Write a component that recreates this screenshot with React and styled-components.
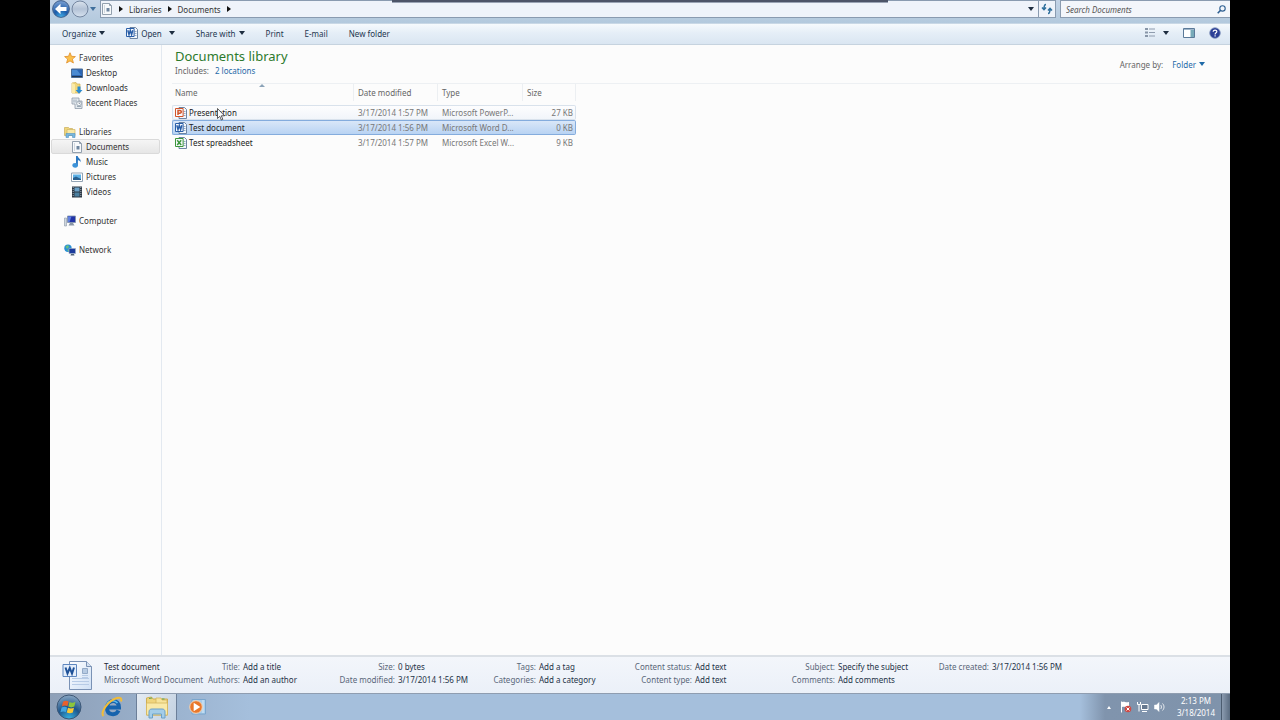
import React from 'react';
import styled, { createGlobalStyle, css } from 'styled-components';

const GlobalStyle = createGlobalStyle`
  * { box-sizing: border-box; }
  body {
    margin: 0;
    background: #000;
    font-family: "Noto Sans", "Open Sans", sans-serif;
    font-size: 8px;
    line-height: 15px;
    color: #333;
  }
  button, input, table { font: inherit; color: inherit; }
`;

const Window = styled.div`
  display: flex;
  flex-direction: column;
  height: 100vh;
  margin: 0 50px;
  overflow: hidden;
  background: #fcfcfc;
  white-space: nowrap;
`;

const PlainButton = styled.button`
  display: flex;
  align-items: center;
  gap: ${({ $gap }) => $gap || '3px'};
  padding: 0;
  border: 0;
  background: none;
  cursor: pointer;
`;

const Caret = styled.span`
  flex: none;
  border: 3px solid transparent;
  border-top: 4px solid ${({ $color }) => $color || '#1e2d40'};
  border-bottom: 0;
`;

const RightCaret = styled.span`
  flex: none;
  border: 3px solid transparent;
  border-left: 4px solid #111;
  border-right: 0;
`;

/* address bar */

const AddressRow = styled.header`
  position: relative;
  display: flex;
  flex: none;
  height: 24px;
  padding-left: 2px;
  gap: 4px;
  background: linear-gradient(#c3d3e6, #b3c9dd);
  border-bottom: 1px solid #c9d8e6;

  &::before {
    content: "";
    position: absolute;
    top: 0;
    left: 29%;
    width: 42%;
    height: 2px;
    background: #4d5468;
    border-bottom: 1px solid #9aa3b4;
  }
`;

const NavButtons = styled.div`
  display: flex;
  align-items: center;
  gap: 1px;
  height: 18px;
`;

const AddressBox = styled.nav`
  display: flex;
  flex: 1;
  align-items: center;
  height: 18px;
  background: #eff3fa;
  border: 1px solid #8a9bb0;
`;

const Crumbs = styled.div`
  display: flex;
  flex: 1;
  align-items: center;
  gap: 6px;

  a {
    color: #333;
    text-decoration: none;
  }
`;

const RefreshButton = styled(PlainButton)`
  justify-content: center;
  width: 17px;
  height: 16px;
  margin-left: 4px;
  border-left: 1px solid #8a9bb0;
`;

const SearchBox = styled.label`
  display: flex;
  align-items: center;
  width: 170px;
  height: 18px;
  padding: 0 4px 0 5px;
  background: #f3f6fb;
  border: 1px solid #8a9bb0;
  border-right: 0;
`;

const SearchInput = styled.input`
  flex: 1;
  min-width: 0;
  padding: 0;
  border: 0;
  outline: 0;
  background: none;

  &::placeholder {
    color: #555;
    font-style: italic;
    opacity: 1;
  }
`;

/* command bar */

const CommandBar = styled.div`
  display: flex;
  flex: none;
  align-items: center;
  gap: 21px;
  height: 21px;
  padding: 0 9px 2px 12px;
  color: #23364f;
  background: linear-gradient(#f6fafd, #e5eef7 45%, #dae6f2);
  border-bottom: 1px solid #c6d3df;
`;

const Spacer = styled.div`
  flex: 1;
`;

const ViewTools = styled.div`
  display: flex;
  align-items: center;
  gap: 14px;
`;

/* body */

const Body = styled.div`
  display: flex;
  flex: 1;
  min-height: 0;
`;

const Sidebar = styled.nav`
  display: flex;
  flex: none;
  flex-direction: column;
  gap: 14px;
  width: 112px;
  padding: 5px 1px 0;
  border-right: 1px solid #e3e9f0;
`;

const TreeGroup = styled.div`
  display: flex;
  flex-direction: column;
`;

const TreeItem = styled.a`
  display: flex;
  align-items: center;
  gap: 3px;
  height: 15px;
  padding-left: ${({ $child }) => ($child ? '19px' : '12px')};
  border: 1px solid transparent;
  border-radius: 2px;
  color: #333;
  text-decoration: none;

  ${({ $active }) => $active && css`
    background: linear-gradient(#f5f5f5, #e6e6e6);
    border-color: #dadada;
  `}
`;

const Main = styled.main`
  flex: 1;
  min-width: 0;
`;

const LibraryHeader = styled.div`
  display: flex;
  justify-content: space-between;
  align-items: center;
  height: 39px;
  margin: 0 10px;
  padding: 0 15px 0 3px;
  color: #666;
  border-bottom: 1px solid #edf0f3;
`;

const LibraryName = styled.div`
  padding-bottom: 5px;
`;

const LibraryTitle = styled.h1`
  margin: 0;
  font-size: 13px;
  font-weight: 400;
  line-height: 18px;
  color: #2c7a2c;
`;

const Includes = styled.p`
  display: flex;
  gap: 6px;
  margin: 0;
  line-height: 12px;

  a {
    color: #1f6aa8;
    text-decoration: none;
  }
`;

const ArrangeBy = styled.div`
  display: flex;
  align-items: center;
  gap: 9px;
  color: #666;
`;

const FolderButton = styled(PlainButton)`
  color: #1f6aa8;
`;

const FileTable = styled.table`
  width: 404px;
  margin-left: 10px;
  table-layout: fixed;
  border-spacing: 0;
  border-collapse: separate;
`;

const HeadCell = styled.th`
  position: relative;
  width: ${({ $width }) => $width};
  height: 17px;
  padding: 0 0 0 ${({ $first }) => ($first ? '3px' : '4px')};
  border-right: 1px solid #eceff2;
  color: #666;
  font-weight: 400;
  line-height: 16px;
  text-align: left;
`;

const SortMark = styled.span`
  position: absolute;
  top: 0;
  left: 87px;
  border: 3px solid transparent;
  border-top: 0;
  border-bottom-color: #8ba3b8;
`;

const HeadGap = styled.tr`
  height: 4px;
`;

const rowState = {
  hover: css`
    background: linear-gradient(#fdfdfe, #f1f5fa);
    border-color: #d9e2ec;
  `,
  selected: css`
    background: linear-gradient(#d9e7f8, #b9d3f3);
    border-color: #84acdd;
  `,
};

const Cell = styled.td`
  height: 15px;
  padding: 0 2px 0 4px;
  border: 1px solid transparent;
  border-width: 1px 0;
  color: #777;
  line-height: 13px;
  text-align: ${({ $right }) => ($right ? 'right' : 'left')};
  overflow: hidden;
  text-overflow: ellipsis;

  &:first-child {
    padding-left: 2px;
    border-left-width: 1px;
    border-radius: 2px 0 0 2px;
    color: #222;
    overflow: visible;
  }
  &:last-child {
    border-right-width: 1px;
    border-radius: 0 2px 2px 0;
  }
  ${({ $state }) => rowState[$state]}
`;

const FileName = styled.span`
  position: relative;
  display: flex;
  align-items: center;
  gap: 2px;
`;

const Pointer = styled.svg`
  position: absolute;
  top: 2px;
  left: 42px;
`;

/* details pane */

const Details = styled.section`
  display: flex;
  flex: none;
  height: 38px;
  padding: 3px 0 0 12px;
  background: linear-gradient(#f3f6fb, #ebf0f8);
  border-top: 2px solid #dbe0e6;
  color: #5a6779;
  line-height: 13px;
`;

const FileSummary = styled.div`
  flex: none;
  width: 110px;
  padding-left: 10px;

  strong {
    display: block;
    font-weight: 400;
    color: #1e2835;
  }
`;

const Props = styled.dl`
  display: grid;
  flex: none;
  grid-template-columns: ${({ $label }) => $label} auto;
  grid-auto-rows: 13px;
  justify-content: start;
  column-gap: 3px;
  width: ${({ $width }) => $width};
  margin: 0;

  dt { text-align: right; }
  dd { margin: 0; color: #253247; }
`;

/* taskbar */

const Taskbar = styled.footer`
  display: flex;
  flex: none;
  align-items: stretch;
  height: 27px;
  background: linear-gradient(90deg, #8ea0b8, #9cb4d0 130px, #a5bfdc 200px, #a5bfdc calc(100% - 150px), #8094ad calc(100% - 125px), #7f93ab);
  border-top: 1px solid #8f9db0;
`;

const TaskButton = styled(PlainButton)`
  justify-content: center;
  width: ${({ $width }) => $width};
  border: 1px solid transparent;
  border-width: 0 1px;

  ${({ $active }) => $active && css`
    background: linear-gradient(120deg, #e4ebf3, #c3d1e1);
    border-color: #6c7f99;
  `}
`;

const Tray = styled.div`
  display: flex;
  align-items: center;
  gap: 5px;
`;

const UpCaret = styled.span`
  border: 2px solid transparent;
  border-top: 0;
  border-bottom: 3px solid #fff;
  margin-right: 4px;
`;

const Clock = styled.time`
  width: 50px;
  color: #fff;
  line-height: 12px;
  text-align: center;
`;

const ShowDesktop = styled.button`
  width: 9px;
  padding: 0;
  border: 0;
  border-left: 1px solid #4c5c70;
  background: linear-gradient(90deg, #8b9bb0, #5a6b80);
`;

/* icons */

const BackIcon = () => (
  <svg width="18" height="18" viewBox="0 0 18 18">
    <defs>
      <radialGradient id="back" cx=".5" cy="1" r=".9">
        <stop offset="0" stopColor="#46b4ec" />
        <stop offset=".5" stopColor="#1c5aa8" />
        <stop offset="1" stopColor="#6d96cc" />
      </radialGradient>
    </defs>
    <circle cx="9" cy="9" r="8.4" fill="url(#back)" stroke="#3d5a85" strokeWidth=".9" />
    <path d="M3 9l5.500-5.200v3.300H14.500v3.800H8.500v3.300z" fill="#fff" />
  </svg>
);

const ForwardIcon = () => (
  <svg width="18" height="18" viewBox="0 0 18 18">
    <defs>
      <linearGradient id="fwd" x2="0" y2="1">
        <stop offset="0" stopColor="#dbe4ee" />
        <stop offset=".5" stopColor="#b3c2d6" />
        <stop offset="1" stopColor="#d6e2ef" />
      </linearGradient>
    </defs>
    <circle cx="9" cy="9" r="8" fill="url(#fwd)" stroke="#7486a0" />
  </svg>
);

const DocIcon = () => (
  <svg width="12" height="12" viewBox="0 0 12 12">
    <path d="M1.500.5h7l2 2v9h-9z" fill="#f7f9fb" stroke="#93a0ae" />
    <path d="M8.500.5v2h2" fill="none" stroke="#93a0ae" />
    <path d="M3 3h1M3 5h1M3 7h1M3 9h1" stroke="#a9b5c2" />
    <path d="M5.500 5h3v3.500h-3z" fill="#6f86a0" />
  </svg>
);

const RefreshIcon = () => (
  <svg width="12" height="12" viewBox="0 0 12 12" fill="none" stroke="#2f6f9c" strokeWidth="1.500">
    <path d="M5 1.500C3.500 1.500 3 3 3 6M1 4.400l2 2.200 2-2.200" />
    <path d="M7 10.500c1.600 0 2-1.500 2-4.500M7 7.600l2-2.200 2 2.200" />
  </svg>
);

const SearchIcon = () => (
  <svg width="9" height="9" viewBox="0 0 9 9" fill="none" stroke="#2e5f91">
    <circle cx="5.500" cy="3.400" r="2.700" strokeWidth="1.100" />
    <path d="M3.600 5.300L.7 8.300" strokeWidth="1.600" />
  </svg>
);

const StarIcon = () => (
  <svg width="12" height="12" viewBox="0 0 12 12">
    <path d="M6 .7l1.500 3.600 3.900.3-3 2.500 1 3.900L6 8.900 2.600 11l1-3.900-3-2.500 3.900-.3z" fill="#fbc04a" stroke="#e08e2c" strokeWidth=".8" />
  </svg>
);

const DesktopIcon = () => (
  <svg width="12" height="12" viewBox="0 0 12 12">
    <path d="M.5 2h11v8.500H.5z" fill="#2c66b4" stroke="#4d6d96" />
    <path d="M1 3h5l4 5H1z" fill="#4b8bd2" />
    <path d="M1 9.500h10" stroke="#21364f" />
  </svg>
);

const DownloadsIcon = () => (
  <svg width="12" height="12" viewBox="0 0 12 12">
    <path d="M1 1l4-.5 1 1.500h3v9H1z" fill="#f1d77b" stroke="#cfae52" strokeWidth=".7" />
    <path d="M1 1l3 1.500v9L1 11z" fill="#fbeba9" />
    <path d="M6.500 4.500h3V8h2L8 11.700 4.600 8h1.900z" fill="#2b8bd0" />
  </svg>
);

const RecentIcon = () => (
  <svg width="12" height="12" viewBox="0 0 12 12">
    <path d="M1 1h7v3h3v7.500H4V7H1z" fill="#e3e9ee" stroke="#8f9ba8" strokeWidth=".8" />
    <path d="M3 2.500v3M5 2.500v3M6 9.500h4" stroke="#9daab6" />
    <circle cx="8" cy="6.500" r="2.300" fill="#f7f9fb" stroke="#7f8e9c" strokeWidth=".7" />
    <path d="M8 5.200v1.300h1" fill="none" stroke="#647484" strokeWidth=".6" />
  </svg>
);

const LibrariesIcon = () => (
  <svg width="12" height="12" viewBox="0 0 12 12">
    <path d="M.5 1.500h4l1 1h3v7h-8z" fill="#f0d67a" stroke="#c9ad5c" strokeWidth=".7" />
    <path d="M3 3.500h8v6H3z" fill="#f8e9a8" stroke="#d0b663" strokeWidth=".7" />
    <path d="M2 7.500h9v4H8.500v-2h-4v2H2z" fill="#79b6df" stroke="#5195c4" strokeWidth=".6" />
  </svg>
);

const MusicIcon = () => (
  <svg width="12" height="12" viewBox="0 0 12 12">
    <path d="M5 0h1.700c.3 2.300 3.600 2.700 2.900 6.200C9 4.800 8 4.200 6.900 4.200V9.500H5z" fill="#2b78c2" />
    <ellipse cx="4.200" cy="9.300" rx="2.800" ry="2.400" fill="#3d93d8" />
  </svg>
);

const PicturesIcon = () => (
  <svg width="12" height="12" viewBox="0 0 12 12">
    <path d="M.5 2h11v8.500H.5z" fill="#fff" stroke="#93a4b5" />
    <path d="M2 3.500h8V9H2z" fill="#5db1e6" />
    <path d="M2 9V7l3-1.500L10 8v1z" fill="#28608f" />
  </svg>
);

const VideosIcon = () => (
  <svg width="12" height="12" viewBox="0 0 12 12">
    <path d="M1 .5h10v11H1z" fill="#2d3844" />
    <path d="M3.500 1.500h5v4h-5z" fill="#6ba2c9" />
    <path d="M3.500 6.500h5v4h-5z" fill="#4a7f9f" />
    <path d="M2.200 1v10M9.800 1v10" stroke="#9fabb8" strokeDasharray="1 1" />
  </svg>
);

const ComputerIcon = () => (
  <svg width="12" height="12" viewBox="0 0 12 12">
    <path d="M.5 3h2v8h-2z" fill="#cfd6de" stroke="#8c99a8" strokeWidth=".6" />
    <path d="M3.500 1h8v6.500h-8z" fill="#2133a8" stroke="#8495aa" strokeWidth=".8" />
    <path d="M4 1.500h3.500l-2 5.500H4z" fill="#5f7fe0" />
    <path d="M6 8h3l1.500 2.500h-6z" fill="#8996a6" />
  </svg>
);

const NetworkIcon = () => (
  <svg width="12" height="12" viewBox="0 0 12 12">
    <circle cx="4" cy="4.200" r="3.700" fill="#2a8fd6" />
    <path d="M1.500 2.500L4 1l1 2-2 2zM3 6l2-.5L5 8z" fill="#69c17e" />
    <path d="M5 4.500h6.500v5H5z" fill="#1c3b9c" stroke="#9caec4" strokeWidth=".7" />
    <path d="M7 10h3l.5 1.500h-4z" fill="#52647a" />
  </svg>
);

const OfficeIcon = ({ color, letter }) => (
  <svg width="12" height="12" viewBox="0 0 12 12">
    <path d="M4 .5h5.500l2 2v9H4z" fill="#f4f8fc" stroke="#5f7898" strokeWidth=".9" />
    <path d="M8.500 4.500h2M8.500 6.500h2M8.500 8.500h2" stroke="#7f97b4" strokeWidth=".8" />
    <path d="M.5 1.500h7.600v8H.5z" fill="#f6f9fd" stroke={color} />
    <path d={letter} fill="none" stroke={color} strokeWidth="1.500" />
  </svg>
);

// strokes of the application marks
const marks = {
  word: 'M1.800 3.200l1.200 4.400 1.300-4.200 1.300 4.200 1.200-4.400',
  powerpoint: 'M3 8V3.400h1.700c2.200 0 2.200 2.800 0 2.800H3',
  excel: 'M2.200 3.200l4 4.700M6.200 3.200l-4 4.700',
};

const ViewsIcon = () => (
  <svg width="12" height="12" viewBox="0 0 12 12">
    <path d="M1 2h3M1 5.500h3M1 9h3" stroke="#8896a8" strokeWidth="2" />
    <path d="M5 2h6M5 5.500h6M5 9h6" stroke="#8f9cae" />
  </svg>
);

const PreviewIcon = () => (
  <svg width="12" height="12" viewBox="0 0 12 12">
    <path d="M.5 1.500h11v9H.5z" fill="#fff" stroke="#5b7a99" />
    <path d="M1 2.500h10" stroke="#9fb6cb" />
    <path d="M7.500 3h3.500v7H7.500z" fill="#77aab9" />
  </svg>
);

const HelpIcon = () => (
  <svg width="12" height="12" viewBox="0 0 12 12">
    <circle cx="6" cy="6" r="5.300" fill="#2b3f96" stroke="#8296bb" strokeWidth=".8" />
    <path d="M4.200 4.700C4.200 2.500 8 2.600 7.800 4.700 7.700 5.800 6.100 5.900 6.100 7.400M6.100 8.200v1.200" fill="none" stroke="#fff" strokeWidth="1.200" />
  </svg>
);

const LargeWordIcon = () => (
  <svg width="32" height="32" viewBox="0 0 32 32">
    <defs>
      <linearGradient id="page" x2="1" y2="1">
        <stop offset="0" stopColor="#fff" />
        <stop offset="1" stopColor="#cfe0f5" />
      </linearGradient>
    </defs>
    <path d="M7.500 1.500h17l5 5v23h-22z" fill="url(#page)" stroke="#7a92b5" />
    <path d="M24.500 1.500v5h5" fill="#d5e2f1" stroke="#7a92b5" />
    <path d="M10 18.500h17M10 21.500h17M10 24.500h17" stroke="#b7cbe6" />
    <path d="M20.500 8.500h5v5h-5z" fill="#b7cbe3" stroke="#93aac7" />
    <path d="M20 15.500h6M20 17.500h6" stroke="#b7cbe6" />
    <path d="M1 4.500h13.500v12H1z" fill="#e4eefb" stroke="#5d86bf" />
    <path d="M3.500 7.500l2 6 2.300-5.500 2.200 5.500 2-6" fill="none" stroke="#1f5299" strokeWidth="2" />
  </svg>
);

const StartIcon = () => (
  <svg width="26" height="26" viewBox="0 0 26 26">
    <defs>
      <radialGradient id="orb" cx=".5" cy="1" r="1">
        <stop offset="0" stopColor="#37b6e4" />
        <stop offset=".5" stopColor="#1e568c" />
        <stop offset="1" stopColor="#8aa7c3" />
      </radialGradient>
    </defs>
    <circle cx="13" cy="13" r="12" fill="url(#orb)" stroke="#3d5776" />
    <path d="M7 7.700c2-1.200 3.700-1.200 5.600-.2l-1.200 4.800c-1.900-1-3.600-.9-5.500.2z" fill="#e9602c" />
    <path d="M13.500 7.900c2 1 3.800 1 6-.2l-1.200 4.900c-2.200 1.100-4 1-6 0z" fill="#8cc63c" />
    <path d="M5.600 13.500c2-1.100 3.700-1.100 5.500-.1l-1.200 4.700c-1.900-1-3.500-.9-5.500.2z" fill="#42a5e2" />
    <path d="M12 13.700c2 1 3.800 1 6 0l-1.200 4.800c-2.200 1.100-4 1-6 0z" fill="#fcc832" />
  </svg>
);

const ExplorerIcon = () => (
  <svg width="24" height="24" viewBox="0 0 24 24">
    <path d="M6.500 12.500h12.500c0-9-12-8.500-12 .5 0 7.500 9 8 11.500 2.500" fill="none" stroke="#1663ad" strokeWidth="4" />
    <path d="M7 9c1.500-4 8-4.500 10.500-1" fill="none" stroke="#5cbcf0" strokeWidth="1.500" />
    <path d="M3.500 21C0 17.500 8 5.500 17 3c3.500-1 5 .5 4 3.500" fill="none" stroke="#f1bc39" strokeWidth="2" />
  </svg>
);

const FoldersIcon = () => (
  <svg width="26" height="24" viewBox="0 0 26 24">
    <path d="M2.500 3l5-1 1.500 2h14.500v16h-21z" fill="#f0d57c" stroke="#cfae54" />
    <path d="M12 3h5l1 2h5v4H12z" fill="#f7e49b" stroke="#d4b55d" strokeWidth=".8" />
    <path d="M2.500 8h21v12h-21z" fill="#f9e9a7" stroke="#d4b55d" strokeWidth=".8" />
    <path d="M5 3.500l3-.5M18 4h2.500" stroke="#5da756" />
    <path d="M5 17c0-2 1-3 3-3h10c2 0 3 1 3 3v6h-3.500v-4h-9v4H5z" fill="#a4cde8" stroke="#6ba0c8" />
  </svg>
);

const PlayerIcon = () => (
  <svg width="22" height="20" viewBox="0 0 22 20">
    <path d="M5 2.500h13.500v14.500H5z" fill="#a9cdea" stroke="#7ba6cd" />
    <path d="M16 3v13" stroke="#d7e9f7" />
    <circle cx="9" cy="10" r="6.300" fill="#e9772a" stroke="#f3d5b8" />
    <path d="M6.700 5.800l6.600 4.200-6.600 4.200z" fill="#fff" />
  </svg>
);

const FlagIcon = () => (
  <svg width="12" height="12" viewBox="0 0 12 12">
    <path d="M1.500.5v11" stroke="#fff" />
    <path d="M2 1c3-1 3 1 7 0v5c-4 1-4-1-7 0z" fill="#fff" />
    <circle cx="8" cy="8" r="3.300" fill="#d04a44" />
    <path d="M6.500 6.500l3 3M9.500 6.500l-3 3" stroke="#fff" />
  </svg>
);

const WiredIcon = () => (
  <svg width="12" height="12" viewBox="0 0 12 12" fill="none" stroke="#fff">
    <path d="M4.500 3.500h6.500v5H4.500z" fill="#66788f" />
    <path d="M5 10.500h5M.5 1v2.500h3V1M2 3.500v7" />
  </svg>
);

const SpeakerIcon = () => (
  <svg width="12" height="12" viewBox="0 0 12 12" fill="none" stroke="#fff">
    <path d="M.5 4h2L5 1.500v9L2.500 8h-2z" fill="#fff" strokeWidth=".5" />
    <path d="M6.700 4c1 1 1 3 0 4M8.500 2.500c2 2 2 5 0 7" strokeWidth=".8" />
  </svg>
);

const tree = [
  [
    { label: 'Favorites', icon: StarIcon },
    { label: 'Desktop', icon: DesktopIcon },
    { label: 'Downloads', icon: DownloadsIcon },
    { label: 'Recent Places', icon: RecentIcon },
  ],
  [
    { label: 'Libraries', icon: LibrariesIcon },
    { label: 'Documents', icon: DocIcon, active: true },
    { label: 'Music', icon: MusicIcon },
    { label: 'Pictures', icon: PicturesIcon },
    { label: 'Videos', icon: VideosIcon },
  ],
  [{ label: 'Computer', icon: ComputerIcon }],
  [{ label: 'Network', icon: NetworkIcon }],
];

const files = [
  { name: 'Presentation', date: '3/17/2014 1:57 PM', type: 'Microsoft PowerP...', size: '27 KB', color: '#d2552a', mark: 'powerpoint', state: 'hover' },
  { name: 'Test document', date: '3/17/2014 1:56 PM', type: 'Microsoft Word D...', size: '0 KB', color: '#2a5fa8', mark: 'word', state: 'selected' },
  { name: 'Test spreadsheet', date: '3/17/2014 1:57 PM', type: 'Microsoft Excel W...', size: '9 KB', color: '#3c963c', mark: 'excel' },
];

const details = [
  { label: '36px', width: '121px', rows: [['Title:', 'Add a title'], ['Authors:', 'Add an author']] },
  { label: '70px', width: '155px', rows: [['Size:', '0 bytes'], ['Date modified:', '3/17/2014 1:56 PM']] },
  { label: '56px', width: '141px', rows: [['Tags:', 'Add a tag'], ['Categories:', 'Add a category']] },
  { label: '71px', width: '156px', rows: [['Content status:', 'Add text'], ['Content type:', 'Add text']] },
  { label: '58px', width: '144px', rows: [['Subject:', 'Specify the subject'], ['Comments:', 'Add comments']] },
  { label: '68px', width: '154px', rows: [['Date created:', '3/17/2014 1:56 PM']] },
];

const App = () => (
  <>
    <GlobalStyle />
    <Window>
      <AddressRow>
        <NavButtons>
          <PlainButton aria-label="Back"><BackIcon /></PlainButton>
          <PlainButton aria-label="Forward"><ForwardIcon /></PlainButton>
          <PlainButton aria-label="Recent pages"><Caret $color="#3f6e9c" /></PlainButton>
        </NavButtons>
        <AddressBox aria-label="Address">
          <Crumbs>
            <DocIcon />
            <RightCaret />
            <a href="#libraries">Libraries</a>
            <RightCaret />
            <a href="#documents">Documents</a>
            <RightCaret />
          </Crumbs>
          <PlainButton aria-label="Previous locations"><Caret /></PlainButton>
          <RefreshButton aria-label="Refresh"><RefreshIcon /></RefreshButton>
        </AddressBox>
        <SearchBox>
          <SearchInput type="text" aria-label="Search Documents" placeholder="Search Documents" />
          <SearchIcon />
        </SearchBox>
      </AddressRow>

      <CommandBar>
        <PlainButton>Organize <Caret /></PlainButton>
        <PlainButton $gap="7px">
          <PlainButton as="span"><OfficeIcon color="#2a5fa8" letter={marks.word} />Open</PlainButton>
          <Caret />
        </PlainButton>
        <PlainButton>Share with <Caret /></PlainButton>
        <PlainButton>Print</PlainButton>
        <PlainButton>E-mail</PlainButton>
        <PlainButton>New folder</PlainButton>
        <Spacer />
        <ViewTools>
          <PlainButton $gap="7px" aria-label="Change your view"><ViewsIcon /><Caret /></PlainButton>
          <PlainButton aria-label="Preview pane"><PreviewIcon /></PlainButton>
          <PlainButton aria-label="Help"><HelpIcon /></PlainButton>
        </ViewTools>
      </CommandBar>

      <Body>
        <Sidebar>
          {tree.map((group) => (
            <TreeGroup key={group[0].label}>
              {group.map(({ label, icon: Icon, active }, i) => (
                <TreeItem key={label} href={`#${label}`} $child={i > 0} $active={active}>
                  <Icon />
                  {label}
                </TreeItem>
              ))}
            </TreeGroup>
          ))}
        </Sidebar>

        <Main>
          <LibraryHeader>
            <LibraryName>
              <LibraryTitle>Documents library</LibraryTitle>
              <Includes>Includes: <a href="#locations">2 locations</a></Includes>
            </LibraryName>
            <ArrangeBy>
              <span>Arrange by:</span>
              <FolderButton>Folder <Caret $color="#1f6aa8" /></FolderButton>
            </ArrangeBy>
          </LibraryHeader>

          <FileTable>
            <thead>
              <tr>
                <HeadCell $width="182px" $first>Name<SortMark /></HeadCell>
                <HeadCell $width="84px">Date modified</HeadCell>
                <HeadCell $width="85px">Type</HeadCell>
                <HeadCell $width="53px">Size</HeadCell>
              </tr>
              <HeadGap />
            </thead>
            <tbody>
              {files.map((file) => (
                <tr key={file.name}>
                  <Cell $state={file.state}>
                    <FileName>
                      <OfficeIcon color={file.color} letter={marks[file.mark]} />
                      {file.name}
                      {file.state === 'hover' && (
                        <Pointer width="9" height="13" viewBox="0 0 9 13">
                          <path d="M.5.5v10l2.300-2.200L4.300 12l1.500-.7L4.300 7.800h3.200z" fill="#fff" stroke="#333" strokeWidth=".8" />
                        </Pointer>
                      )}
                    </FileName>
                  </Cell>
                  <Cell $state={file.state}>{file.date}</Cell>
                  <Cell $state={file.state}>{file.type}</Cell>
                  <Cell $state={file.state} $right>{file.size}</Cell>
                </tr>
              ))}
            </tbody>
          </FileTable>
        </Main>
      </Body>

      <Details>
        <LargeWordIcon />
        <FileSummary>
          <strong>Test document</strong>
          Microsoft Word Document
        </FileSummary>
        {details.map((group) => (
          <Props key={group.rows[0][0]} $label={group.label} $width={group.width}>
            {group.rows.map(([label, value]) => (
              <React.Fragment key={label}>
                <dt>{label}</dt>
                <dd>{value}</dd>
              </React.Fragment>
            ))}
          </Props>
        ))}
      </Details>

      <Taskbar>
        <TaskButton $width="38px" aria-label="Start"><StartIcon /></TaskButton>
        <TaskButton $width="48px" aria-label="Internet Explorer"><ExplorerIcon /></TaskButton>
        <TaskButton $width="41px" $active aria-label="Windows Explorer"><FoldersIcon /></TaskButton>
        <TaskButton $width="41px" aria-label="Media Player"><PlayerIcon /></TaskButton>
        <Spacer />
        <Tray>
          <UpCaret />
          <FlagIcon />
          <WiredIcon />
          <SpeakerIcon />
          <Clock>2:13 PM<br />3/18/2014</Clock>
        </Tray>
        <ShowDesktop aria-label="Show desktop" />
      </Taskbar>
    </Window>
  </>
);

export default App;
